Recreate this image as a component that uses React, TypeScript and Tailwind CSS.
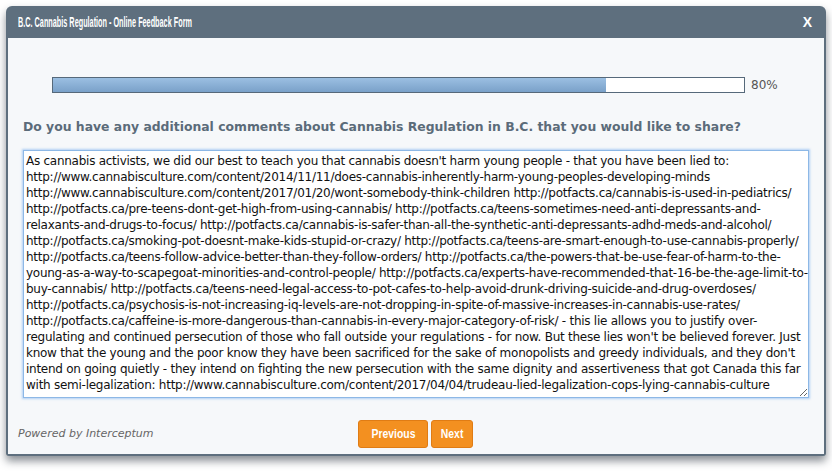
import React from 'react';

const lines = [
  "As cannabis activists, we did our best to teach you that cannabis doesn't harm young people - that you have been lied to:",
  'http://www.cannabisculture.com/content/2014/11/11/does-cannabis-inherently-harm-young-peoples-developing-minds',
  'http://www.cannabisculture.com/content/2017/01/20/wont-somebody-think-children http://potfacts.ca/cannabis-is-used-in-pediatrics/',
  'http://potfacts.ca/pre-teens-dont-get-high-from-using-cannabis/ http://potfacts.ca/teens-sometimes-need-anti-depressants-and-',
  'relaxants-and-drugs-to-focus/ http://potfacts.ca/cannabis-is-safer-than-all-the-synthetic-anti-depressants-adhd-meds-and-alcohol/',
  'http://potfacts.ca/smoking-pot-doesnt-make-kids-stupid-or-crazy/ http://potfacts.ca/teens-are-smart-enough-to-use-cannabis-properly/',
  'http://potfacts.ca/teens-follow-advice-better-than-they-follow-orders/ http://potfacts.ca/the-powers-that-be-use-fear-of-harm-to-the-',
  'young-as-a-way-to-scapegoat-minorities-and-control-people/ http://potfacts.ca/experts-have-recommended-that-16-be-the-age-limit-to-',
  'buy-cannabis/ http://potfacts.ca/teens-need-legal-access-to-pot-cafes-to-help-avoid-drunk-driving-suicide-and-drug-overdoses/',
  'http://potfacts.ca/psychosis-is-not-increasing-iq-levels-are-not-dropping-in-spite-of-massive-increases-in-cannabis-use-rates/',
  'http://potfacts.ca/caffeine-is-more-dangerous-than-cannabis-in-every-major-category-of-risk/ - this lie allows you to justify over-',
  "regulating and continued persecution of those who fall outside your regulations - for now. But these lies won't be believed forever. Just",
  "know that the young and the poor know they have been sacrificed for the sake of monopolists and greedy individuals, and they don't",
  'intend on going quietly - they intend on fighting the new persecution with the same dignity and assertiveness that got Canada this far',
  'with semi-legalization: http://www.cannabisculture.com/content/2017/04/04/trudeau-lied-legalization-cops-lying-cannabis-culture',
];

const App: React.FC = () => {
  return (
    <div className="w-[832px] h-[471px] bg-white pt-[6px] px-[6px] font-['DejaVu_Sans',sans-serif]">
      <div className="rounded-t-[6px] rounded-b-[3px] bg-[#5e6f7e] px-[2px] pb-[2px] shadow-[0_5px_8px_rgba(40,50,60,0.55)]">
        {/* Title bar */}
        <div className="h-[32px] flex items-center justify-between pl-[10px] pr-[12px] text-white font-['Liberation_Sans',sans-serif]">
          <span className="inline-block origin-left scale-x-[0.52] text-[14px] font-bold whitespace-nowrap">
            B.C. Cannabis Regulation - Online Feedback Form
          </span>
          <span className="text-[14px] font-bold">X</span>
        </div>

        <div className="bg-[#f6f8fa] h-[416px] flex flex-col">
          {/* Progress */}
          <div className="flex items-center mt-[38px] ml-[44px]">
            <div className="w-[693px] h-[16px] border border-[#56697a] bg-white">
              <div className="w-[80%] h-full bg-gradient-to-b from-[#9bbfe2] to-[#7aa1c9]"></div>
            </div>
            <span className="ml-[6px] text-[12px] text-[#555]">80%</span>
          </div>

          {/* Question */}
          <h2 className="mt-[24px] ml-[15px] text-[12.4px] font-bold text-[#5b6b79] leading-[17px]">
            Do you have any additional comments about Cannabis Regulation in B.C. that you would like to share?
          </h2>

          {/* Answer */}
          <textarea
            readOnly
            wrap="off"
            defaultValue={lines.join('\n')}
            className="mt-[15px] mx-[15px] h-[248px] border border-[#8db8e6] bg-white px-[2px] pt-[2px] text-[12px] tracking-[-0.26px] leading-[16px] text-[#111] resize-y overflow-hidden outline-none shadow-[0_0_2px_1px_rgba(130,180,240,0.6)] font-['DejaVu_Sans',sans-serif]"
          />

          {/* Footer */}
          <div className="relative mt-[22px] h-[28px] flex items-center">
            <span className="ml-[10px] text-[11px] italic text-[#666]">Powered by Interceptum</span>
            <div className="absolute left-[350px] top-0 flex gap-[3px]">
              <button className="w-[70px] h-[28px] rounded-[3px] border border-[#e07c14] bg-[#f39020] text-white font-['Liberation_Sans',sans-serif] flex items-center justify-center">
                <span className="inline-block scale-x-[0.8] text-[13px] font-bold">Previous</span>
              </button>
              <button className="w-[42px] h-[28px] rounded-[3px] border border-[#e07c14] bg-[#f39020] text-white font-['Liberation_Sans',sans-serif] flex items-center justify-center">
                <span className="inline-block scale-x-[0.8] text-[13px] font-bold">Next</span>
              </button>
            </div>
          </div>
        </div>
      </div>
    </div>
  );
};

export default App;
